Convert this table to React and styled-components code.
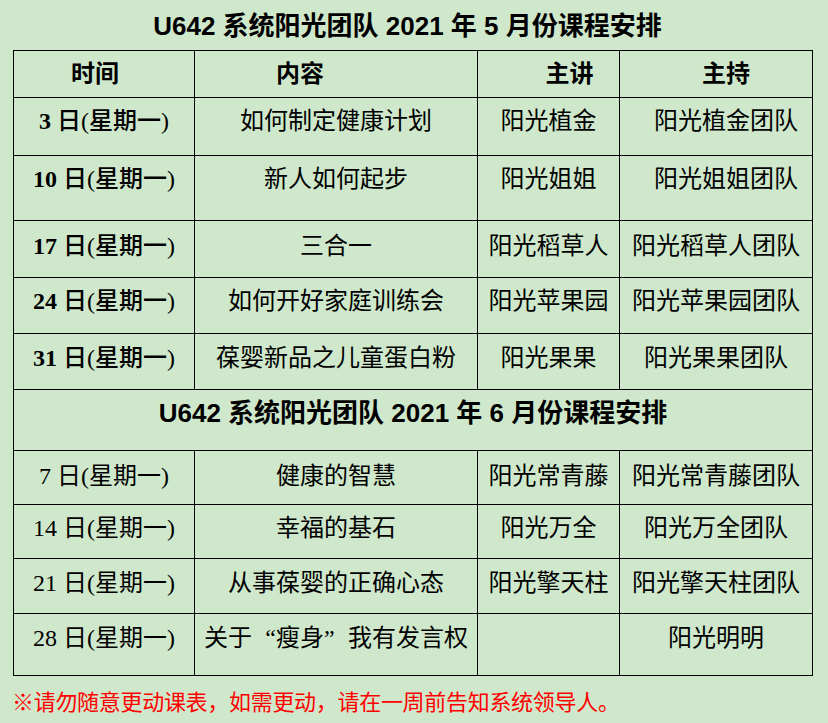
import React from "react";
import styled, { createGlobalStyle } from "styled-components";

const GlobalStyle = createGlobalStyle`
  html, body {
    margin: 0;
    padding: 0;
    background: #cfe8cc;
  }
  body {
    font-family: "Liberation Serif", "Noto Sans CJK SC", serif;
    color: #000;
  }
`;

const Page = styled.div`
  width: 828px;
  height: 723px;
  padding-left: 13px;
  box-sizing: border-box;
  background: #cfe8cc;
  overflow: hidden;
`;

const Title = styled.h1`
  margin: 0;
  width: 799px;
  height: 50px;
  padding: 2px 10px 0 0;
  box-sizing: border-box;
  display: flex;
  align-items: center;
  justify-content: center;
  font-family: "Liberation Sans", "Noto Sans CJK SC", sans-serif;
  font-size: 26px;
  font-weight: 700;
  line-height: 1;
  white-space: pre;
`;

const Table = styled.table`
  width: 799px;
  table-layout: fixed;
  border-collapse: collapse;
  font-size: 24px;
  line-height: 24px;
`;

const Col = styled.col`
  width: ${(p) => p.$w}px;
`;

const Row = styled.tr`
  height: ${(p) => p.$h}px;
`;

const Cell = styled.td`
  border: 1px solid #000;
  padding: ${(p) => p.$top ?? 11}px ${(p) => p.$right ?? 0}px 0
    ${(p) => p.$left ?? 0}px;
  vertical-align: top;
  text-align: center;
  white-space: nowrap;
  overflow: hidden;
`;

const HeadCell = styled.th`
  border: 1px solid #000;
  padding: 0 ${(p) => p.$right ?? 0}px 0 ${(p) => p.$left ?? 0}px;
  vertical-align: middle;
  text-align: center;
  font-weight: 700;
`;

const SubTitleCell = styled.td`
  border: 1px solid #000;
  padding: 10px 0 0;
  vertical-align: top;
  text-align: center;
  font-family: "Liberation Sans", "Noto Sans CJK SC", sans-serif;
  font-size: 26px;
  font-weight: 700;
  line-height: 26px;
  white-space: pre;
`;

const DayNum = styled.span`
  font-weight: ${(p) => (p.$bold ? 700 : 400)};
`;

const DayRest = styled.span`
  font-weight: ${(p) => (p.$bold ? 500 : 400)};
`;

const Quote = styled.span`
  display: inline-block;
  width: 1em;
  text-align: ${(p) => p.$side};
`;

const Footer = styled.p`
  margin: 13px 0 0 -1px;
  font-family: "Noto Sans CJK SC", sans-serif;
  font-size: 22px;
  line-height: 22px;
  letter-spacing: -0.3px;
  color: #ff0000;
  white-space: nowrap;
`;

const may = [
  { h: 58, top: 11, day: "3", topic: "如何制定健康计划", speaker: "阳光植金", host: "阳光植金团队", shift: 20 },
  { h: 65, top: 11, day: "10", topic: "新人如何起步", speaker: "阳光姐姐", host: "阳光姐姐团队", shift: 20 },
  { h: 57, top: 13, day: "17", topic: "三合一", speaker: "阳光稻草人", host: "阳光稻草人团队" },
  { h: 56, top: 11, day: "24", topic: "如何开好家庭训练会", speaker: "阳光苹果园", host: "阳光苹果园团队" },
  { h: 56, top: 12, day: "31", topic: "葆婴新品之儿童蛋白粉", speaker: "阳光果果", host: "阳光果果团队" },
];

const june = [
  { h: 54, top: 13, day: "7", topic: "健康的智慧", speaker: "阳光常青藤", host: "阳光常青藤团队" },
  { h: 54, top: 11, day: "14", topic: "幸福的基石", speaker: "阳光万全", host: "阳光万全团队" },
  { h: 55, top: 12, day: "21", topic: "从事葆婴的正确心态", speaker: "阳光擎天柱", host: "阳光擎天柱团队" },
  {
    h: 62,
    top: 12,
    day: "28",
    topic: (
      <>
        关于<Quote $side="right">“</Quote>瘦身<Quote $side="left">”</Quote>我有发言权
      </>
    ),
    speaker: "",
    host: "阳光明明",
  },
];

const ScheduleRow = ({ item, bold }) => (
  <Row $h={item.h}>
    <Cell $top={item.top}>
      <DayNum $bold={bold}>{item.day} </DayNum>
      <DayRest $bold={bold}>日(星期一)</DayRest>
    </Cell>
    <Cell $top={item.top}>{item.topic}</Cell>
    <Cell $top={item.top}>{item.speaker}</Cell>
    <Cell $top={item.top} $left={item.shift}>
      {item.host}
    </Cell>
  </Row>
);

const App = () => {
  return (
    <>
      <GlobalStyle />
      <Page>
        <Title>U642 系统阳光团队 2021 年 5 月份课程安排</Title>
        <Table>
          <colgroup>
            <Col $w={181} />
            <Col $w={283} />
            <Col $w={142} />
            <Col $w={193} />
          </colgroup>
          <tbody>
            <Row $h={47}>
              <HeadCell $right={18}>时间</HeadCell>
              <HeadCell $right={72}>内容</HeadCell>
              <HeadCell $left={42}>主讲</HeadCell>
              <HeadCell $left={20}>主持</HeadCell>
            </Row>
            {may.map((item) => (
              <ScheduleRow key={item.day} item={item} bold />
            ))}
            <Row $h={61}>
              <SubTitleCell colSpan={4}>
                U642 系统阳光团队 2021 年 6 月份课程安排
              </SubTitleCell>
            </Row>
            {june.map((item) => (
              <ScheduleRow key={item.day} item={item} />
            ))}
          </tbody>
        </Table>
        <Footer>※请勿随意更动课表，如需更动，请在一周前告知系统领导人。</Footer>
      </Page>
    </>
  );
};

export default App;
